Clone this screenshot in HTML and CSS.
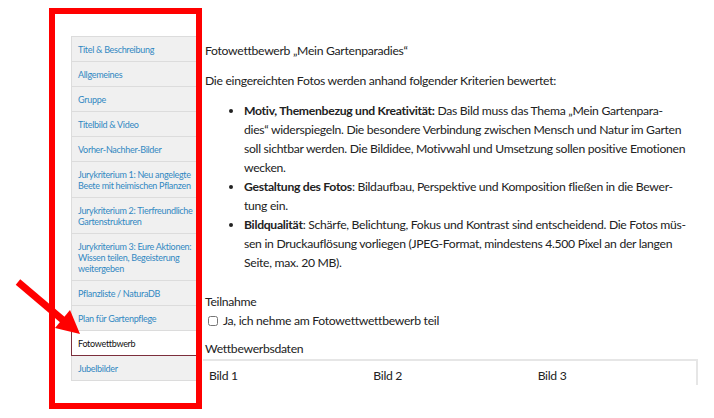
FILE: index.html
```html
<!DOCTYPE html>
<html lang="de">
<head>
    <meta charset="UTF-8">
    <meta name="viewport" content="width=device-width, initial-scale=1.0">
    <title>Fotowettbewerb</title>
    <link rel="stylesheet" href="styles.css">
</head>
<body>
    <div class="page">
        <nav class="tabs">
            <a class="tab" href="#">Titel &amp; Beschreibung</a>
            <a class="tab" href="#">Allgemeines</a>
            <a class="tab" href="#">Gruppe</a>
            <a class="tab" href="#">Titelbild &amp; Video</a>
            <a class="tab" href="#">Vorher-Nachher-Bilder</a>
            <a class="tab" href="#">Jurykriterium 1: Neu angelegte Beete mit heimischen Pflanzen</a>
            <a class="tab" href="#">Jurykriterium 2: Tierfreundliche Gartenstrukturen</a>
            <a class="tab" href="#">Jurykriterium 3: Eure Aktionen: Wissen teilen, Begeisterung weitergeben</a>
            <a class="tab" href="#">Pflanzliste / NaturaDB</a>
            <a class="tab" href="#">Plan für Gartenpflege</a>
            <a class="tab active" href="#">Fotowettbwerb</a>
            <a class="tab" href="#">Jubelbilder</a>
        </nav>

        <main class="content">
            <p>Fotowettbewerb „Mein Gartenparadies“</p>
            <p>Die eingereichten Fotos werden anhand folgender Kriterien bewertet:</p>
            <ul class="criteria">
                <li><strong>Motiv, Themenbezug und Kreativität:</strong> Das Bild muss das Thema „Mein Gartenpara-<br>dies“ widerspiegeln. Die besondere Verbindung zwischen Mensch und Natur im Garten<br>soll sichtbar werden. Die Bildidee, Motivwahl und Umsetzung sollen positive Emotionen<br>wecken.</li>
                <li><strong>Gestaltung des Fotos</strong>: Bildaufbau, Perspektive und Komposition fließen in die Bewer-<br>tung ein.</li>
                <li><strong>Bildqualität</strong>: Schärfe, Belichtung, Fokus und Kontrast sind entscheidend. Die Fotos müs-<br>sen in Druckauflösung vorliegen (JPEG-Format, mindestens 4.500 Pixel an der langen<br>Seite, max. 20 MB).</li>
            </ul>

            <div class="field">
                <div class="field-label">Teilnahme</div>
                <label class="check"><input type="checkbox"> Ja, ich nehme am Fotowettwettbewerb teil</label>
            </div>

            <div class="field">
                <div class="field-label">Wettbewerbsdaten</div>
                <div class="photos">
                    <div class="photo">Bild 1</div>
                    <div class="photo">Bild 2</div>
                    <div class="photo">Bild 3</div>
                </div>
            </div>
        </main>
    </div>

    <div class="highlight"></div>
    <svg class="arrow" width="100" height="80" viewBox="0 0 100 80">
        <line x1="18" y1="12" x2="64" y2="51" stroke="#ff0000" stroke-width="7"/>
        <polygon points="80,64 55,58 70,40" fill="#ff0000"/>
    </svg>
</body>
</html>
```

FILE: styles.css
```css
body {
    margin: 0;
    background-color: #fff;
    font-family: Lato, Arial, sans-serif;
    color: #222;
}
.page {
    display: flex;
    height: 385px;
    overflow: hidden;
}
.tabs {
    display: flex;
    flex-direction: column;
    flex-shrink: 0;
    width: 127px;
    margin: 36px 0 0 71px;
    align-self: flex-start;
    border-top: 1px solid #dcdcdc;
    border-left: 1px solid #dcdcdc;
}
.tab {
    display: block;
    padding: 6.5px 6px;
    background-color: #f0f0f0;
    border-bottom: 1px solid #dcdcdc;
    color: #3288c2;
    text-decoration: none;
    font-size: 9px;
    letter-spacing: -0.3px;
    line-height: 11px;
}
.tab.active {
    background-color: #fff;
    color: #111;
    margin-left: -1px;
    border-left: 1px solid #7c2f3c;
    border-bottom-color: #7c2f3c;
}
.content {
    flex: 1;
    min-width: 0;
    margin-left: 6px;
    padding-top: 41px;
    padding-right: 16px;
    font-size: 12.2px;
    letter-spacing: -0.3px;
    line-height: 19px;
}
.content p {
    margin: 0 0 11px;
}
.criteria {
    margin: 0;
    padding-left: 39px;
}
.criteria li {
    white-space: nowrap;
}
.field {
    margin-top: 20px;
}
.field + .field {
    margin-top: 9px;
}
.check {
    display: flex;
    align-items: center;
    gap: 5px;
    padding-left: 3px;
}
.check input {
    width: 10px;
    height: 10px;
    margin: 0;
}
.photos {
    display: grid;
    grid-template-columns: repeat(3, 1fr);
    margin-top: 1px;
    margin-left: -2px;
    border-top: 2px solid #e6e6e6;
    border-right: 2px solid #e6e6e6;
}
.photo {
    padding: 5px 6px 20px;
}
.highlight {
    position: absolute;
    left: 49px;
    top: 8px;
    width: 153px;
    height: 401px;
    box-sizing: border-box;
    border: 6px solid #ff0000;
}
.arrow {
    position: absolute;
    left: 0;
    top: 270px;
}
```
